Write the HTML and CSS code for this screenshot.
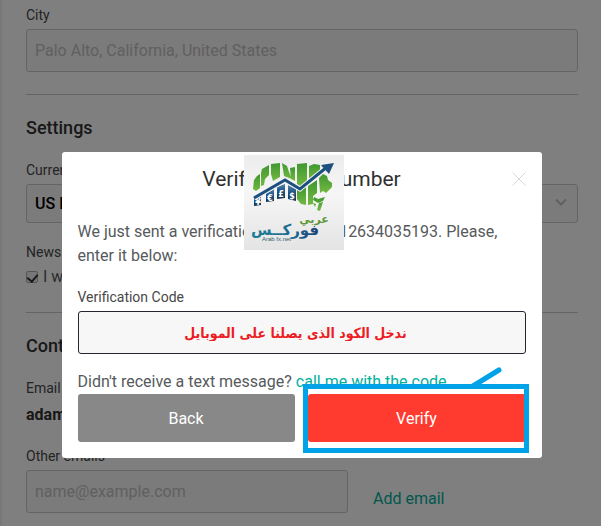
FILE: index.html
```html
<!DOCTYPE html>
<html lang="en">
<head>
    <meta charset="UTF-8">
    <meta name="viewport" content="width=device-width, initial-scale=1.0">
    <title>Verify Phone Number</title>
    <link rel="stylesheet" href="styles.css">
</head>
<body>
    <form class="profile">
        <section class="section">
            <label class="label" for="city">City</label>
            <input class="field" id="city" type="text" placeholder="Palo Alto, California, United States">
        </section>

        <section class="section settings">
            <h2>Settings</h2>
            <label class="label" for="currency">Currency</label>
            <div class="select-wrap">
                <select class="select" id="currency">
                    <option>US Dollar</option>
                </select>
                <svg class="chevron" viewBox="0 0 12 8"><path d="M1 1.5l5 5 5-5" fill="none" stroke="#c0c0c0" stroke-width="2"/></svg>
            </div>
            <div class="label newsletter">Newsletter</div>
            <label class="check"><input type="checkbox" checked> I want to receive news</label>
        </section>

        <section class="section contact">
            <h2>Contact</h2>
            <div class="label">Email</div>
            <div class="email">adam</div>
            <label class="label" for="other">Other emails</label>
            <div class="add-row">
                <input class="field" id="other" type="email" placeholder="name@example.com">
                <a href="#">Add email</a>
            </div>
        </section>
    </form>

    <div class="overlay">
        <div class="modal" role="dialog" aria-labelledby="title">
            <header class="modal-header">
                <h1 id="title">Verify Phone Number</h1>
                <button class="close" type="button" aria-label="Close">
                    <svg viewBox="0 0 14 14"><path d="M.5.5l13 13M13.5.5l-13 13" stroke="#d8d8d8" fill="none"/></svg>
                </button>
            </header>

            <p class="message">We just sent a verification code to +212634035193. Please, enter it below:</p>

            <label class="label" for="code">Verification Code</label>
            <input class="field code" id="code" type="text" dir="rtl" value="ندخل الكود الذي يصلنا على الموبايل">

            <p class="resend">Didn't receive a text message? <a href="#">call me with the code</a></p>

            <div class="actions">
                <button class="btn back" type="button">Back</button>
                <div class="verify-wrap">
                    <button class="btn verify" type="button">Verify</button>
                    <svg class="tail" viewBox="0 0 36 24"><path d="M5 20L31 4" stroke="#00a2e8" stroke-width="5" stroke-linecap="round"/></svg>
                    <span class="highlight"></span>
                </div>
            </div>

            <svg class="logo" viewBox="0 0 100 95" role="img" aria-label="Arab fx.net">
                <defs>
                    <linearGradient id="paper" x1="0" y1="0" x2="0" y2="1">
                        <stop offset="0" stop-color="#ececec"/>
                        <stop offset=".4" stop-color="#f6f6f6"/>
                        <stop offset="1" stop-color="#e4e4e4"/>
                    </linearGradient>
                    <linearGradient id="leaf" x1="0" y1="0" x2="0" y2="1">
                        <stop offset="0" stop-color="#3f982f"/>
                        <stop offset="1" stop-color="#74b843"/>
                    </linearGradient>
                    <linearGradient id="sea" x1="0" y1="0" x2="0" y2="1">
                        <stop offset="0" stop-color="#5583a8"/>
                        <stop offset=".4" stop-color="#245a8c"/>
                        <stop offset="1" stop-color="#12304f"/>
                    </linearGradient>
                    <linearGradient id="word" x1="0" y1="0" x2="1" y2="0">
                        <stop offset="0" stop-color="#1c7f96"/>
                        <stop offset=".6" stop-color="#1c6a90"/>
                        <stop offset="1" stop-color="#1d4078"/>
                    </linearGradient>
                </defs>
                <rect width="100" height="95" fill="url(#paper)"/>
                <!-- land -->
                <g fill="url(#leaf)">
                    <path d="M9 34l1-9 3-4 3-2v14l-4 3z"/>
                    <path d="M17 18l1-4 7-4v10l-4 4-1 6-3 1z"/>
                    <path d="M27 9l9-1v14l-7 4-2-7z"/>
                    <path d="M38 8l5 3 2 6 3 7-3-1-5-2z"/>
                    <path d="M46 13l5-1v14l-4-2z"/>
                    <path d="M53 9l10-1v19l-6 5-4-3z"/>
                    <path d="M65 11l5-2 6 1v8l-11 8z"/>
                    <path d="M78 11l4-1 3 2-5 4z"/>
                    <path d="M53 35l9-3v18l-5-1-4-5z"/>
                    <path d="M64 31l9-6v13l-4 3v8l-5 1z"/>
                    <path d="M75 23l4-4 4 2 1 4 4 3v4l-6 6-3-2-3 2z"/>
                    <path d="M70 42l4 2 7-2-2 4-5 2-5-3zM75 48l4-1-3 9-3-1zM69 48l3 1-1 3z"/>
                </g>
                <!-- currency tiles -->
                <g fill="url(#sea)">
                    <path d="M10 42l7-2v10l-7 1z"/>
                    <path d="M22 37l8-3v12l-8 1z"/>
                    <path d="M33 32l8-3v14l-8 1z"/>
                    <path d="M44 30l8 4v12l-8-2z"/>
                </g>
                <g class="currency">
                    <text x="14" y="50">¥</text>
                    <text x="26" y="46">€</text>
                    <text x="37" y="42">£</text>
                    <text x="48" y="44">$</text>
                </g>
                <!-- trend arrow -->
                <path d="M10 43l31-18 15 9 27-22" fill="none" stroke="#f3f3f3" stroke-width="5"/>
                <path d="M10 43l31-18 15 9 27-22" fill="none" stroke="#1d4f7f" stroke-width="3"/>
                <path d="M77 10l13-2-5 11z" fill="#1d4f7f"/>
                <!-- wordmark -->
                <text class="word-green" x="70" y="68">عربي</text>
                <text class="word-blue" x="41" y="80">فوركــس</text>
                <text class="word-small" x="18" y="86">Arab fx.net</text>
            </svg>
        </div>
    </div>
</body>
</html>
```
FILE: styles.css
```css
* {
    box-sizing: border-box;
}
body {
    margin: 0;
    height: 100vh;
    overflow: hidden;
    border-left: 2px solid #f0f0f0;
    background: #fff;
    font-family: Roboto, "Liberation Sans", sans-serif;
    font-size: 16px;
    line-height: 24px;
    color: #565a5c;
}
h1, h2, p {
    margin: 0;
}
a {
    color: #00b09b;
    text-decoration: none;
}
.profile {
    padding: 5px 23px 0 24px;
}
.section {
    padding-bottom: 22px;
    border-bottom: 1px solid #c8c8c8;
}
.settings {
    padding-bottom: 25px;
}
.contact {
    border-bottom: 0;
}
h2 {
    padding: 21px 0 20px;
    font-size: 18px;
    font-weight: 500;
    line-height: 24px;
    color: #303030;
}
.label {
    display: block;
    padding-bottom: 4px;
    font-size: 14px;
    line-height: 20px;
    color: #484848;
}
.field {
    display: block;
    width: 100%;
    height: 43px;
    padding: 0 8px;
    border: 1px solid #c8c8c8;
    border-radius: 3px;
    background: #f7f7f7;
    font: 16px Roboto, "Liberation Sans", sans-serif;
}
.field::placeholder {
    color: #c0c0c0;
}
.select-wrap {
    position: relative;
}
.select {
    display: block;
    width: 100%;
    height: 39px;
    padding: 0 8px;
    appearance: none;
    border: 1px solid #c8c8c8;
    border-radius: 3px;
    background: #f7f7f7;
    color: #000;
    font: 500 16px Roboto, "Liberation Sans", sans-serif;
}
.chevron {
    position: absolute;
    top: 14px;
    right: 11px;
    width: 12px;
    height: 8px;
}
.newsletter {
    padding-top: 19px;
    padding-bottom: 5px;
}
.check {
    display: flex;
    align-items: center;
    gap: 5px;
    height: 20px;
}
.check input {
    appearance: none;
    display: grid;
    justify-content: center;
    width: 12px;
    height: 12px;
    margin: 0;
    border: 1px solid #aaa;
    border-radius: 2px;
    background: #eee;
}
.check input:checked::before {
    content: "";
    width: 5px;
    height: 8px;
    border: solid #333;
    border-width: 0 2px 2px 0;
    transform: rotate(40deg);
}
.email {
    padding-bottom: 18px;
    font-weight: 700;
    line-height: 26px;
    color: #303030;
}
.add-row {
    display: flex;
    align-items: center;
    gap: 25px;
}
.add-row .field {
    flex: 0 0 322px;
}
.add-row a {
    padding-top: 14px;
}

/* dialog */
.overlay {
    position: fixed;
    inset: 0;
    padding: 152px 0 0 2px;
    background: rgba(0, 0, 0, 0.5);
}
.modal {
    position: relative;
    max-width: 480px;
    margin: 0 auto;
    padding: 12px 16px 16px;
    border-radius: 3px;
    background: #fff;
}
.modal-header {
    display: flex;
    align-items: center;
    justify-content: center;
    padding-bottom: 26px;
}
h1 {
    font-size: 21px;
    font-weight: 400;
    line-height: 30px;
    color: #303030;
}
.close {
    position: absolute;
    top: 20px;
    right: 16px;
    width: 14px;
    height: 14px;
    padding: 0;
    border: 0;
    background: none;
}
.close svg {
    display: block;
}
.message {
    padding-bottom: 19px;
}
.code {
    padding: 0 20px 0 8px;
    border-color: #252530;
    color: #ed1c24;
    font: bold 14px "DejaVu Sans Condensed", "DejaVu Sans", sans-serif;
    text-align: center;
}
.resend {
    padding-top: 16px;
}
.actions {
    display: grid;
    grid-template-columns: 217fr 218fr;
    gap: 13px;
}
.btn {
    display: block;
    width: 100%;
    height: 48px;
    border: 0;
    border-radius: 3px;
    color: #fff;
    font: 16px Roboto, "Liberation Sans", sans-serif;
}
.back {
    background: #888;
}
.verify {
    background: #ff3b30;
}
.verify-wrap {
    position: relative;
}
.highlight {
    position: absolute;
    inset: -10px -3px -11px -5px;
    border: 5px solid #00a2e8;
}
.tail {
    position: absolute;
    top: -28px;
    right: 22px;
    width: 36px;
    height: 24px;
}

/* logo */
.logo {
    position: absolute;
    top: 3px;
    left: 182px;
    width: 100px;
    height: 95px;
}
.logo text {
    text-anchor: middle;
    font-family: "DejaVu Sans", sans-serif;
    font-weight: bold;
}
.currency {
    fill: #fff;
    font-size: 8px;
}
.logo .word-green {
    fill: #5d9838;
    font-size: 11px;
}
.logo .word-blue {
    fill: url(#word);
    font-size: 15px;
}
.logo .word-small {
    fill: #2d6070;
    font-family: "Liberation Sans", sans-serif;
    font-size: 6px;
    font-weight: normal;
    text-anchor: start;
}
```
